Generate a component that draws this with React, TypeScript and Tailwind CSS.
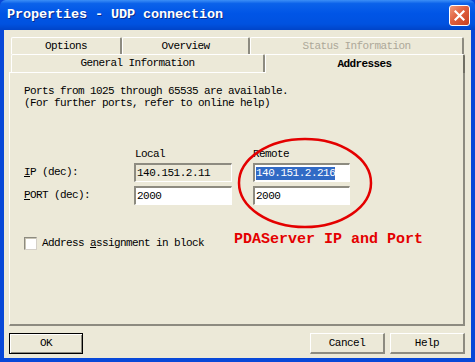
import React from 'react';

const mono = { fontFamily: '"Liberation Mono", "DejaVu Sans Mono", monospace' };

const Tab: React.FC<{ label: string; width: string; muted?: boolean }> = ({ label, width, muted }) => (
  <div
    className={`${width} h-full flex items-center justify-center bg-[#ece9d8] border-t border-l border-white border-r-2 border-r-[#8d8b80] rounded-tl-[2px] rounded-tr-[2px]
      ${muted ? 'text-[#aca899]' : 'text-black'}`}
  >
    <span className="text-[11px] tracking-[-0.6px]">{label}</span>
  </div>
);

const Field: React.FC<{ value: string; disabled?: boolean; selected?: boolean; width: string }> = ({
  value,
  disabled,
  selected,
  width,
}) => (
  <div
    className={`${width} h-[19px] flex items-center pl-[1px] border-t-2 border-l-2 border-t-[#8d8b80] border-l-[#8d8b80] border-r border-b border-r-white border-b-white
      ${disabled ? 'bg-[#ece9d8]' : 'bg-white'}`}
  >
    <span
      className={`text-[11px] tracking-[-0.5px] leading-[13px] ${selected ? 'bg-[#316ac5] text-white' : 'text-black'}`}
    >
      {value}
    </span>
  </div>
);

const Button: React.FC<{ label: string; width: string; isDefault?: boolean }> = ({ label, width, isDefault }) => (
  <div
    className={`${width} h-[21px] flex items-center justify-center bg-[#ece9d8] text-black
      ${isDefault ? 'border border-black shadow-[inset_1px_1px_0_#fff,inset_-1px_-1px_0_#8d8b80]' : 'border-t border-l border-white border-r-2 border-b-2 border-r-[#8d8b80] border-b-[#8d8b80]'}`}
  >
    <span className="text-[11px] tracking-[-0.5px]">{label}</span>
  </div>
);

export default function App() {
  return (
    <div className="w-[475px] h-[362px] flex flex-col bg-[#0848d8] overflow-hidden select-none" style={mono}>
      {/* Title bar */}
      <div className="h-[30px] shrink-0 flex items-center justify-between pl-[7px] pr-[5px] bg-[linear-gradient(to_bottom,#3c8ff6_0%,#0b62ea_12%,#0055e6_45%,#0052e0_80%,#0044c8_100%)] rounded-t-[6px]">
        <span className="text-[13.5px] font-bold text-white tracking-[-0.1px] [text-shadow:1px_1px_0_#0a2c8c]">
          Properties - UDP connection
        </span>
        <div className="w-[21px] h-[21px] rounded-[3px] border border-white bg-[linear-gradient(135deg,#f09a7c_0%,#e0603e_45%,#c8401f_100%)] flex items-center justify-center">
          <svg width="11" height="11" viewBox="0 0 11 11">
            <path d="M1.5 1.5 L9.5 9.5 M9.5 1.5 L1.5 9.5" stroke="white" strokeWidth="2.2" strokeLinecap="square" />
          </svg>
        </div>
      </div>

      {/* Body */}
      <div className="flex-1 mx-[4px] bg-[#ece9d8] flex flex-col pl-[5px] pr-[6px] pt-[7px]">
        {/* Tabs row 1 */}
        <div className="flex h-[17px] ml-[2px]">
          <Tab label="Options" width="w-[111px]" />
          <Tab label="Overview" width="w-[128px]" />
          <Tab label="Status Information" width="w-[214px]" muted />
        </div>
        {/* Tabs row 2 */}
        <div className="flex items-end h-[18px] ml-[2px]">
          <Tab label="General Information" width="w-[254px]" />
          <div className="w-[200px] h-[19px] relative z-10 -mb-[1px] flex items-center justify-center bg-[#ece9d8] border-t border-l border-white border-r-2 border-r-[#716f64] rounded-tr-[2px]">
            <span className="text-[11px] font-semibold tracking-[-0.6px]">Addresses</span>
          </div>
        </div>

        {/* Panel */}
        <div className="relative h-[254px] border-t border-l border-white border-r-2 border-b-2 border-r-[#8d8b80] border-b-[#8d8b80] pl-[14px] pt-[12px] text-[11px] tracking-[-0.6px] text-black">
          <div className="leading-[12px]">
            <div>Ports from 1025 through 65535 are available.</div>
            <div>(For further ports, refer to online help)</div>
          </div>

          <div className="mt-[40px] flex flex-col">
            <div className="flex h-[13px] items-end mb-[1px]">
              <div className="w-[111px]" />
              <div className="w-[118px]">Local</div>
              <div>Remote</div>
            </div>
            <div className="flex items-center">
              <div className="w-[110px]">
                <span className="underline">I</span>P (dec):
              </div>
              <Field value="140.151.2.11" width="w-[98px]" disabled />
              <div className="w-[21px]" />
              <Field value="140.151.2.216" width="w-[97px]" selected />
            </div>
            <div className="flex items-center mt-[4px]">
              <div className="w-[110px]">
                <span className="underline">P</span>ORT (dec):
              </div>
              <Field value="2000" width="w-[98px]" />
              <div className="w-[21px]" />
              <Field value="2000" width="w-[97px]" />
            </div>
          </div>

          <div className="mt-[27px] flex items-center">
            <div className="w-[13px] h-[13px] bg-white border-t border-l border-t-[#8d8b80] border-l-[#8d8b80] border-r border-b border-r-[#d4d0c8] border-b-[#d4d0c8] shadow-[inset_1px_1px_0_#c8c4b4]" />
            <span className="ml-[5px]">
              Address <span className="underline">a</span>ssignment in block
            </span>
            <span className="ml-[30px] text-[15px] font-bold tracking-[0px] text-[#e40000] -translate-y-[3px]">
              PDAServer IP and Port
            </span>
          </div>

          {/* Red annotation ellipse */}
          <svg className="absolute left-[227px] top-[64px]" width="138" height="95" viewBox="0 0 138 95">
            <ellipse cx="68" cy="46" rx="66" ry="44" fill="none" stroke="#e40000" strokeWidth="2.5" />
          </svg>
        </div>

        {/* Buttons */}
        <div className="flex mt-[7px]">
          <Button label="OK" width="w-[74px]" isDefault />
          <div className="flex-1" />
          <Button label="Cancel" width="w-[75px]" />
          <div className="w-[5px]" />
          <Button label="Help" width="w-[75px]" />
        </div>
      </div>
      <div className="h-[4px] shrink-0" />
    </div>
  );
}
